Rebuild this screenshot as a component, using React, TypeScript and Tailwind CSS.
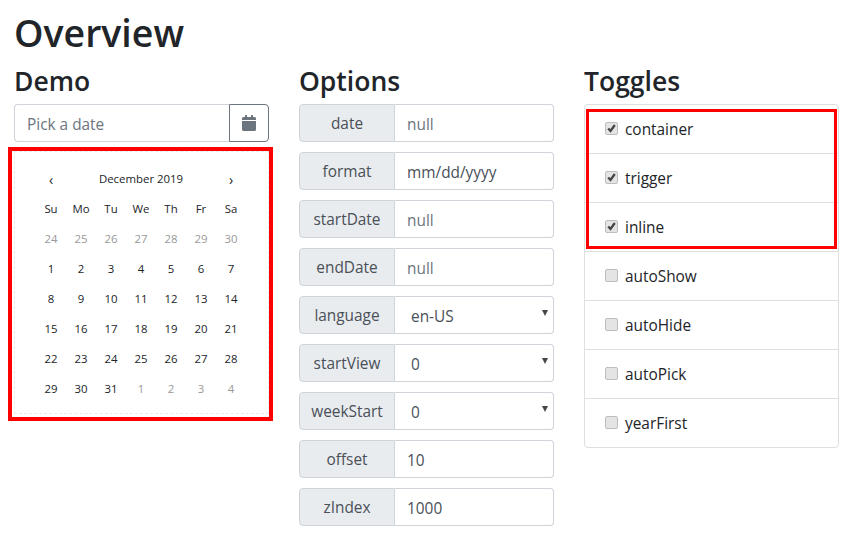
const font = { fontFamily: '"Open Sans", "Noto Sans", sans-serif' };

function Cal() {
  return (
    <svg width="14" height="16" viewBox="0 0 448 512" fill="#6c757d">
      <path d="M0 464c0 26.5 21.5 48 48 48h352c26.500 0 48-21.500 48-48V192H0v272zM400 64h-48V16c0-8.800-7.200-16-16-16h-32c-8.800 0-16 7.200-16 16v48H160V16c0-8.800-7.200-16-16-16h-32c-8.800 0-16 7.200-16 16v48H48C21.500 64 0 85.500 0 112v48h448v-48c0-26.500-21.500-48-48-48z" />
    </svg>
  );
}

function Check({ on }: { on: boolean }) {
  return (
    <span className="relative -mt-[1px] w-[13px] h-[13px] shrink-0 rounded-[2px] border border-[#bdbdbd] bg-[#e4e4e4]">
      {on && (
        <svg className="absolute left-0 top-0" width="11" height="11" viewBox="0 0 11 11" fill="none">
          <path d="M2.200 5.500 L4.500 8 L8.800 2" stroke="#454545" strokeWidth="2.300" />
        </svg>
      )}
    </span>
  );
}

function Row({ label, value, placeholder, select }: { label: string; value?: string; placeholder?: string; select?: boolean }) {
  return (
    <div className="flex h-[38px] w-full text-[15.4px]">
      <div className="flex items-center justify-center w-[96px] shrink-0 pt-[2px] bg-[#e9ecef] border border-[#ced4da] rounded-l-[4px] text-[#495057]">
        {label}
      </div>
      <div className={`relative flex items-center flex-1 border border-l-0 border-[#ced4da] rounded-r-[4px] bg-white ${select ? 'pl-[16px]' : 'pl-[12px]'}`}>
        <span className={`pt-[4px] ${placeholder ? 'text-[#6c757d]' : 'text-[#495057]'}`}>{placeholder ?? value}</span>
        {select && <span className="absolute right-[5px] top-[13px] w-0 h-0 border-l-[3.500px] border-r-[3.500px] border-t-[6px] border-l-transparent border-r-transparent border-t-[#444]" />}
      </div>
    </div>
  );
}

const prev = [24, 25, 26, 27, 28, 29, 30];
const days = Array.from({ length: 31 }, (_, i) => i + 1);
const next = [1, 2, 3, 4];

const rows: { label: string; value?: string; placeholder?: string; select?: boolean }[] = [
  { label: 'date', placeholder: 'null' },
  { label: 'format', value: 'mm/dd/yyyy' },
  { label: 'startDate', placeholder: 'null' },
  { label: 'endDate', placeholder: 'null' },
  { label: 'language', value: 'en-US', select: true },
  { label: 'startView', value: '0', select: true },
  { label: 'weekStart', value: '0', select: true },
  { label: 'offset', value: '10' },
  { label: 'zIndex', value: '1000' },
];

const toggles: [string, boolean][] = [
  ['container', true],
  ['trigger', true],
  ['inline', true],
  ['autoShow', false],
  ['autoHide', false],
  ['autoPick', false],
  ['yearFirst', false],
];

export default function App() {
  return (
    <div style={font} className="w-[855px] h-[555px] overflow-hidden bg-white text-[#212529] px-[14px] pt-[9px]">
      <h1 className="text-[37.5px] leading-[48px] font-semibold mb-[8px]">Overview</h1>
      <div className="grid grid-cols-[255px_255px_255px] gap-x-[30px]">
        <div>
          <h3 className="text-[26.5px] leading-[34px] font-semibold mb-[6px] -mt-[2px] pt-[1px]">Demo</h3>
          <div className="flex h-[38px] text-[15.4px]">
            <div className="flex items-center flex-1 pl-[12px] pt-[4px] border border-r-0 border-[#ced4da] rounded-l-[4px] text-[#6c757d]">Pick a date</div>
            <div className="flex items-center justify-center w-[40px] border border-[#6c757d] rounded-r-[4px]">
              <Cal />
            </div>
          </div>
          <div className="relative mt-[9px] border border-dashed border-[#e9ecef] h-[263px] pt-[12px] text-[11.4px] text-[#212529]">
            <div className="absolute -left-[7px] -top-[5px] w-[265px] h-[274px] border-[4px] border-[#ff0000]" />
            <div className="w-[210px] ml-[21px]">
              <div className="grid grid-cols-7 h-[30px] items-center text-center">
                <span className="text-[14px]">‹</span>
                <span className="col-span-5">December 2019</span>
                <span className="text-[14px]">›</span>
              </div>
              <div className="grid grid-cols-7 text-center leading-[30px]">
                {['Su', 'Mo', 'Tu', 'We', 'Th', 'Fr', 'Sa'].map((d) => <span key={d}>{d}</span>)}
                {prev.map((d) => <span key={`p${d}`} className="text-[#999]">{d}</span>)}
                {days.map((d) => <span key={d}>{d}</span>)}
                {next.map((d) => <span key={`n${d}`} className="text-[#999]">{d}</span>)}
              </div>
            </div>
          </div>
        </div>
        <div>
          <h3 className="text-[26.5px] leading-[34px] font-semibold mb-[6px] -mt-[2px] pt-[1px]">Options</h3>
          <div className="flex flex-col gap-[10px]">
            {rows.map((r) => <Row key={r.label} {...r} />)}
          </div>
        </div>
        <div>
          <h3 className="text-[26.5px] leading-[34px] font-semibold mb-[6px] -mt-[2px] pt-[1px]">Toggles</h3>
          <div className="relative border border-[#dfdfdf] rounded-[4px]">
            <div className="absolute left-[1px] top-[4px] w-[251px] h-[140px] border-[3px] border-[#ff0000] z-10" />
            {toggles.map(([t, on], i) => (
              <div key={t} className={`flex items-center pl-[20px] gap-[7px] text-[15.4px] text-[#212529] ${i ? 'h-[49px] border-t border-[#dfdfdf]' : 'h-[48px]'}`}>
                <Check on={on} />
                <span className="pt-[2px]">{t}</span>
              </div>
            ))}
          </div>
        </div>
      </div>
    </div>
  );
}
